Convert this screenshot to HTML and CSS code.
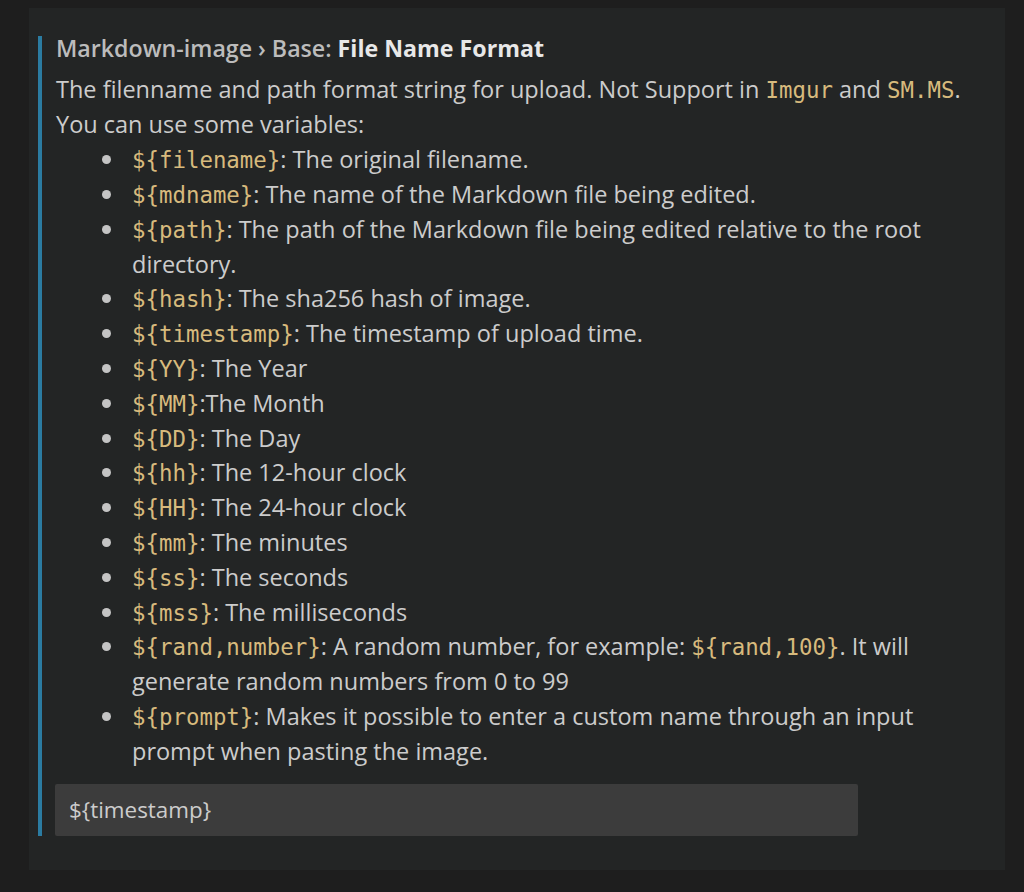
FILE: index.html
```html
<!DOCTYPE html>
<html lang="en">
<head>
<meta charset="utf-8">
<title>Settings</title>
<link rel="stylesheet" href="styles.css">
</head>
<body>
<div class="panel">
  <div class="setting">
    <div class="title"><span class="cat">Markdown-image › Base: </span><span class="name">File Name Format</span></div>
    <div class="desc">
      <p class="line1">The filenname and path format string for upload. Not Support in <code>Imgur</code> and <code>SM.MS</code>.</p>
      <p>You can use some variables:</p>
      <ul>
        <li><code>${filename}</code>: The original filename.</li>
        <li><code>${mdname}</code>: The name of the Markdown file being edited.</li>
        <li><code>${path}</code><span>: The path of the Markdown file being edited relative to the root</span> <span>directory.</span></li>
        <li><code>${hash}</code>: The sha256 hash of image.</li>
        <li><code>${timestamp}</code>: The timestamp of upload time.</li>
        <li><code>${YY}</code>: The Year</li>
        <li><code>${MM}</code>:The Month</li>
        <li><code>${DD}</code>: The Day</li>
        <li><code>${hh}</code>: The 12-hour clock</li>
        <li><code>${HH}</code>: The 24-hour clock</li>
        <li><code>${mm}</code>: The minutes</li>
        <li><code>${ss}</code>: The seconds</li>
        <li><code>${mss}</code>: The milliseconds</li>
        <li><code>${rand,number}</code><span>: A random number, for example: </span><code>${rand,100}</code><span>. It will</span> <span>generate random numbers from 0 to 99</span></li>
        <li><code>${prompt}</code><span>: Makes it possible to enter a custom name through an input</span> <span>prompt when pasting the image.</span></li>
      </ul>
    </div>
    <div class="input">${timestamp}</div>
  </div>
</div>
</body>
</html>
```
FILE: styles.css
```css
html, body {
  margin: 0;
  padding: 0;
  background: #1e1e1e;
}
body {
  font-family: "Open Sans", "Noto Sans", sans-serif;
  font-size: 23.5px;
  color: #cccccc;
}
.panel {
  margin: 8px 0 0 29px;
  width: 976px;
  box-sizing: border-box;
  background: #232525;
  padding: 28px 30px 34px 9px;
}
.setting {
  border-left: 4px solid #2b7ca2;
  padding-left: 14px;
}
.title {
  line-height: 24px;
  font-size: 23.2px;
  font-weight: 600;
  white-space: nowrap;
}
.title .cat {
  color: #bcbcbc;
}
.title .name {
  color: #e8e8e8;
  font-weight: 700;
}
.desc {
  margin-top: 11.6px;
  line-height: 34.8px;
}
.desc p {
  margin: 0;
}
.desc .line1 {
  margin-bottom: 1px;
}
code {
  font-family: "DejaVu Sans Mono", "Liberation Mono", monospace;
  font-size: 22.4px;
  line-height: 1;
  color: #d7ba7d;
}
ul {
  list-style: none;
  margin: 0;
  padding: 0 0 0 76px;
}
li {
  position: relative;
}
li::before {
  content: "";
  position: absolute;
  left: -30px;
  top: 13px;
  width: 9px;
  height: 9px;
  border-radius: 50%;
  background: #c4c4c4;
}
.input {
  margin: 15px 0 0 -1px;
  width: 803px;
  height: 52px;
  box-sizing: border-box;
  background: #3c3c3c;
  border-radius: 2px;
  padding: 0 14px;
  line-height: 52px;
  color: #cccccc;
  font-size: 22.4px;
}
```
